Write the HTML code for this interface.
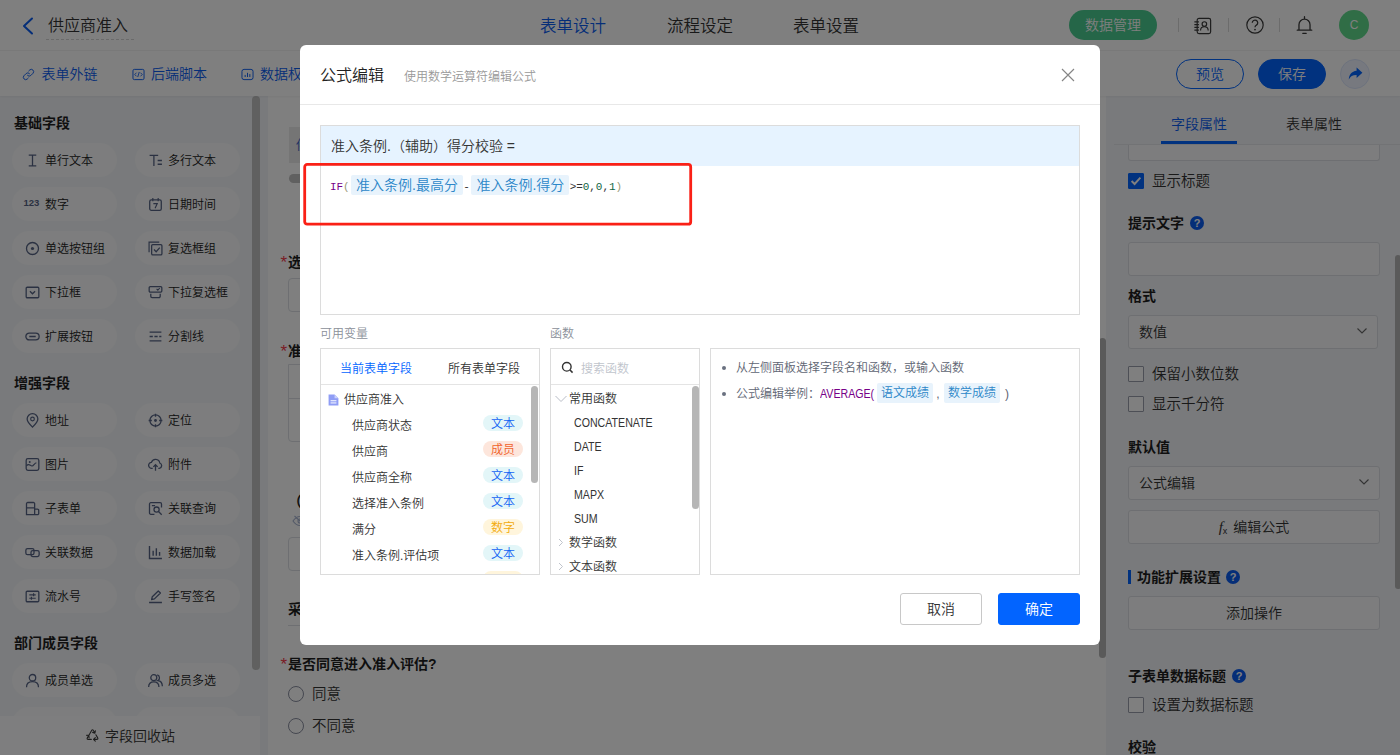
<!DOCTYPE html>
<html lang="zh-CN">
<head>
<meta charset="utf-8">
<title>公式编辑</title>
<style>
*{box-sizing:border-box;margin:0;padding:0}
html,body{width:1400px;height:755px;overflow:hidden;background:#fff}
body{font-family:"Liberation Sans","Noto Sans CJK SC",sans-serif;font-size:14px;font-weight:350;color:#333;position:relative}
.abs{position:absolute}
i{font-style:normal;display:block}
svg{display:block}
/* ---------- header ---------- */
#hdr{position:absolute;left:0;top:0;width:1400px;height:51px;background:#fff;border-bottom:1px solid #f2f2f2}
#hdr .back{position:absolute;left:21px;top:16.500px}
#hdr .title{position:absolute;left:46px;top:12px;height:28px;line-height:27px;padding:0 6px 0 2px;font-size:16px;color:#333;border-bottom:1px dashed #d4d4d4}
#hdr .nav{position:absolute;top:1px;height:50px;line-height:50px;font-size:16.5px;color:#333;white-space:nowrap}
#hdr .nav.on{color:#0a5cf0}
#hdr .dm{position:absolute;left:1069px;top:10px;width:88px;height:30px;border-radius:15px;background:#4acc90;color:#fff;font-size:14px;line-height:30px;text-align:center}
#hdr .sep{position:absolute;top:18px;width:1px;height:14px;background:#d9d9d9}
#hdr .ava{position:absolute;left:1339px;top:10px;width:30px;height:30px;border-radius:15px;background:#60da8c;color:#fff;font-size:12px;line-height:30px;text-align:center}
/* ---------- toolbar ---------- */
#tb{position:absolute;left:0;top:51px;width:1400px;height:45px;background:#fff;z-index:2;box-shadow:0 1px 2px rgba(0,0,0,.050)}
#tb .lk{position:absolute;top:1px;height:44px;line-height:44px;font-size:14px;color:#0a5cf0;white-space:nowrap}
#tb .ic{position:absolute;top:16.500px;width:13px;height:13px}
#tb .pill{position:absolute;top:8px;width:68px;height:30px;border-radius:15px;font-size:14px;line-height:28px;text-align:center;border:1px solid #0264ff}
#tb .pv{left:1176px;color:#0264ff;background:#fff}
#tb .sv{left:1258px;color:#fff;background:#0264ff}
#tb .sh{position:absolute;left:1340px;top:8px;width:30px;height:30px;border-radius:15px;background:#eef3ff;border:1px solid #dbe5fb}
/* ---------- left sidebar ---------- */
#side{position:absolute;left:0;top:95px;width:268px;height:660px;background:#f3f5f8;overflow:hidden}
#side h4{position:absolute;left:14px;font-size:14px;font-weight:700;color:#1f1f1f;line-height:20px;white-space:nowrap}
#side .fp{position:absolute;width:105px;height:34px;border-radius:17px;background:#fafbfc;font-size:12px;line-height:37px;color:#222;white-space:nowrap;padding-left:33px;overflow:hidden}
#side .fp svg{position:absolute;left:12.500px;top:9.500px;width:15px;height:15px}
#side .n123{position:absolute;left:11.500px;top:-3px;font-size:9.500px;font-weight:700;color:#566384;letter-spacing:0}
#side .c1{left:12px}
#side .c2{left:135px}
#side .sb{position:absolute;left:252px;top:1px;width:8px;height:574px;border-radius:4px;background:#c0c0c0}
#side .bin{position:absolute;left:0;top:621px;width:260px;height:39px;background:#fdfdfe;font-size:14px;color:#333;line-height:41px;padding-left:105px}
#side .bin .rc{position:absolute;left:84.500px;top:11px}
/* ---------- canvas ---------- */
#cv{position:absolute;left:268px;top:95px;width:832px;height:660px;background:#fff;overflow:hidden}
#cv .lab{position:absolute;left:20px;font-size:14px;font-weight:700;color:#1f1f1f;line-height:20px;white-space:nowrap}
#cv .lab b{position:absolute;left:-7.500px;top:1px;color:#f5384a;font-weight:400;font-size:17px}
#cv .inp{position:absolute;left:20px;width:790px;height:34px;border:1px solid #dcdfe4;border-radius:4px;background:#fff}
#cv .rd{position:absolute;left:20px;width:16px;height:16px;border:1px solid #8a8fa0;border-radius:8px;background:#fff}
#cv .rdl{position:absolute;left:44px;font-size:14.500px;line-height:20px;color:#333;white-space:nowrap}
#gut{position:absolute;left:1100px;top:95px;width:8px;height:660px;background:#fff}
#gut i{position:absolute;left:-1.500px;top:243px;width:7.800px;height:320px;border-radius:4px;background:#b4b4b4}
/* ---------- right panel ---------- */
#rp{position:absolute;left:1108px;top:95px;width:292px;height:660px;background:#f3f5f8;box-shadow:-2px 0 0 #f3f5f8}
#rp .tab{position:absolute;top:19px;font-size:14px;line-height:20px;color:#333;white-space:nowrap}
#rp .tab.on{color:#0a5cf0}
#rp .ul{position:absolute;left:53px;top:46px;width:76px;height:3px;background:#0264ff}
#rp .ln{position:absolute;left:6px;top:49px;width:286px;height:1px;background:#e4e6ea}
#rp .lab{position:absolute;left:20px;font-size:14px;font-weight:700;color:#1f1f1f;line-height:20px;white-space:nowrap}
#rp .box{position:absolute;left:20px;width:252px;height:34px;border:1px solid #dcdfe4;border-radius:3px;background:#fafbfc;font-size:14px;line-height:32px;color:#333;padding-left:10px;white-space:nowrap}
#rp .box.c{text-align:center;padding-left:0}
#rp .ck{position:absolute;left:20px;width:16px;height:16px;border:1px solid #9a9fac;border-radius:1px;background:#fff}
#rp .ck.on{background:#0264ff;border-color:#0264ff}
#rp .ckl{position:absolute;left:44px;font-size:14.500px;line-height:20px;color:#333;white-space:nowrap}
#rp .q{position:absolute;width:14px;height:14px;border-radius:7px;background:#0a5cf0;color:#fff;font-size:11px;font-weight:700;line-height:14px;text-align:center}
#rp .chev{position:absolute;right:9px;top:11px}
#rp .sb{position:absolute;left:286.500px;top:160px;width:6px;height:334px;border-radius:3px;background:#b4b4b4}
/* ---------- overlay & modal ---------- */
#mask{position:absolute;left:0;top:0;width:1400px;height:755px;background:rgba(0,0,0,.5);z-index:10}
#dlg{position:absolute;left:300px;top:45px;width:800px;height:600px;background:#fff;border-radius:6px;z-index:11}
#dlg .ttl{position:absolute;left:20px;top:19px;font-size:16px;line-height:24px;color:#222;white-space:nowrap}
#dlg .sub{position:absolute;left:104px;top:22px;font-size:12px;line-height:20px;color:#999;white-space:nowrap}
#dlg .x{position:absolute;left:761px;top:22.500px}
#dlg .hl{position:absolute;left:0;top:59px;width:800px;height:1px;background:#e8e8e8}
#dlg .fb{position:absolute;left:20px;top:80px;width:760px;height:190px;border:1px solid #dcdcdc;background:#fff}
#dlg .fb .hd{height:40px;background:#e6f3ff;font-size:14px;line-height:40px;color:#333;padding-left:10px;white-space:nowrap}
#dlg .code{position:absolute;left:9px;top:50.500px;height:20px;line-height:20px;white-space:nowrap;font-family:"Liberation Mono",monospace;font-size:11px;letter-spacing:-.100px;color:#333}
#dlg .code .k{color:#770088}
#dlg .code .p{color:#999977}
#dlg .code .n{color:#116644}
#dlg .tag{display:inline-block;letter-spacing:0;margin-left:1.500px;position:relative;top:-1.500px;height:20px;line-height:20px;padding:0 5px;border-radius:2px;background:#e8f3fc;color:#2b86c8;font-family:"Liberation Sans","Noto Sans CJK SC",sans-serif;font-size:14px;vertical-align:top}
#dlg .red{position:absolute;left:3px;top:118px}
#dlg .sl{position:absolute;top:279px;font-size:12px;line-height:20px;color:#8a8f99}
#dlg .pn{position:absolute;top:303px;height:227px;border:1px solid #dcdcdc;background:#fff;overflow:hidden;font-size:12px;color:#333}
#dlg .pn .th{position:absolute;left:0;top:0;width:100%;height:36px;border-bottom:1px solid #e4e4e4}
#dlg .pn .t{position:absolute;top:9.500px;line-height:20px;white-space:nowrap}
#dlg .pn .r{position:absolute;line-height:20px;white-space:nowrap}
#dlg .pn .vs{position:absolute;width:7px;border-radius:4px;background:#b6b6b6}
#dlg .bd{position:absolute;margin-top:-1px;left:162px;width:40px;height:16px;border-radius:8px;font-size:12px;line-height:19px;text-align:center;overflow:hidden}
#dlg .bd.tx{background:#e3f6f8;color:#1464f4}
#dlg .bd.mb{background:#fde6dc;color:#f0622a}
#dlg .bd.nm{background:#fff5dc;color:#f2aa0a}
#dlg .en{display:inline-block;transform:scaleX(.885);transform-origin:0 50%}
#dlg .hp{color:#5e6573}
#dlg .hp .dot{position:absolute;left:10.500px;width:4px;height:4px;border-radius:2px;background:#6a7180}
#dlg .hp .tg{display:inline-block;height:20px;line-height:20px;position:relative;top:-1px;padding:0 3.800px;border-radius:2px;background:#e8f3fc;color:#2b86c8;vertical-align:top;margin:0 2px}
#dlg .btn{position:absolute;top:548px;width:82px;height:32px;border-radius:3px;font-size:14px;line-height:30px;text-align:center}
#dlg .cancel{left:600px;border:1px solid #c8c8c8;background:#fff;color:#333}
#dlg .ok{left:698px;border:1px solid #0264ff;background:#0264ff;color:#fff}
</style>
</head>
<body>
<!-- header -->
<div id="hdr">
  <svg class="back" width="14" height="18" viewBox="0 0 14 18"><path d="M11 1.5 L3 9 L11 16.5" fill="none" stroke="#0a5cf0" stroke-width="2" stroke-linecap="round" stroke-linejoin="round"/></svg>
  <div class="title">供应商准入</div>
  <div class="nav on" style="left:540px">表单设计</div>
  <div class="nav" style="left:667px">流程设定</div>
  <div class="nav" style="left:793px">表单设置</div>
  <div class="dm">数据管理</div>
  <i class="sep" style="left:1178px"></i>
  <i class="sep" style="left:1228px"></i>
  <i class="sep" style="left:1279px"></i>
  <svg class="abs" style="left:1192.500px;top:15.500px" width="20" height="20" viewBox="0 0 22 22"><rect x="4.600" y="2.600" width="14.800" height="16.800" rx="2" fill="none" stroke="#3a3a3a" stroke-width="1.300"/><path d="M1.500 6.500h5M1.500 9.500h5M1.500 12.500h5M1.500 15.500h5" stroke="#3a3a3a" stroke-width="1.200"/><circle cx="12.500" cy="8.800" r="2.500" fill="none" stroke="#3a3a3a" stroke-width="1.300"/><path d="M8.300 16c0-2.800 1.800-4.200 4.200-4.200s4.200 1.400 4.200 4.200" fill="none" stroke="#3a3a3a" stroke-width="1.300"/></svg>
  <svg class="abs" style="left:1244.500px;top:15px" width="20" height="20" viewBox="0 0 22 22"><circle cx="11" cy="11" r="9" fill="none" stroke="#3a3a3a" stroke-width="1.300"/><path d="M8 8.600a3 3 0 1 1 4.600 2.500c-1 .7-1.600 1.200-1.600 2.400" fill="none" stroke="#3a3a3a" stroke-width="1.400"/><circle cx="11" cy="16" r=".95" fill="#3a3a3a"/></svg>
  <svg class="abs" style="left:1295px;top:14.500px" width="19" height="21" viewBox="0 0 22 24"><path d="M11 1.800v2M4.600 17V11a6.400 6.400 0 0 1 12.800 0v6M2.600 17.400h16.800M9 21h4" fill="none" stroke="#3a3a3a" stroke-width="1.500" stroke-linecap="round"/></svg>
  <div class="ava">C</div>
</div>
<!-- toolbar -->
<div id="tb">
  <svg class="ic" style="left:22px" width="15" height="15" viewBox="0 0 15 15"><path d="M6.400 8.600a2.700 2.700 0 0 0 3.800 0l2.600-2.600a2.700 2.700 0 0 0-3.800-3.800L7.800 3.400M8.600 6.400a2.700 2.700 0 0 0-3.800 0L2.200 9a2.700 2.700 0 0 0 3.800 3.800l1.200-1.200" fill="none" stroke="#0a5cf0" stroke-width="1.100" stroke-linecap="round"/></svg>
  <svg class="ic" style="left:131.500px" width="15" height="15" viewBox="0 0 15 15"><rect x="1.100" y="1.600" width="12.800" height="11.800" rx="1.600" fill="none" stroke="#0a5cf0" stroke-width="1.100"/><path d="M5.200 5.400L3.200 7.500l2 2.100M9.800 5.400l2 2.100-2 2.100M8.400 4.600L6.600 10.400" fill="none" stroke="#0a5cf0" stroke-width="1"/></svg>
  <svg class="ic" style="left:240.500px" width="15" height="15" viewBox="0 0 15 15"><rect x="1.100" y="1.600" width="12.800" height="11.800" rx="2.400" fill="none" stroke="#0a5cf0" stroke-width="1.100"/><path d="M4.800 10.400V8M7.500 10.400V5.600M10.200 10.400V7" stroke="#0a5cf0" stroke-width="1.100"/></svg>
  <div class="lk" style="left:41.500px">表单外链</div>
  <div class="lk" style="left:151px">后端脚本</div>
  <div class="lk" style="left:260px">数据权限</div>
  <div class="pill pv">预览</div>
  <div class="pill sv">保存</div>
  <div class="sh"><svg style="margin:7px 0 0 7px" width="15" height="14" viewBox="0 0 15 14"><path d="M8.600 0.600L14.400 5.800 8.600 11V7.900C4.800 7.800 2.400 9.200 0.800 12.600 1 7.600 3.600 4.200 8.600 3.700z" fill="#0264ff"/></svg></div>
</div>
<!-- sidebar -->
<div id="side">
  <h4 style="top:18px">基础字段</h4>
  <div class="fp c1" style="top:48px"><svg width="14" height="14" viewBox="0 0 14 14"><path d="M3.5 2h7M3.5 12h7M7 2v10" fill="none" stroke="#566384" stroke-width="1.2"/></svg>单行文本</div>
  <div class="fp c2" style="top:48px"><svg width="14" height="14" viewBox="0 0 14 14"><path d="M1.5 2.2h8M5.5 2.2v10M9 7h4M9 10.5h4" fill="none" stroke="#566384" stroke-width="1.2"/></svg>多行文本</div>
  <div class="fp c1" style="top:92px"><span class="n123">123</span>数字</div>
  <div class="fp c2" style="top:92px"><svg width="14" height="14" viewBox="0 0 14 14"><rect x="1.6" y="2.6" width="10.8" height="9.8" rx="1.5" fill="none" stroke="#566384" stroke-width="1.2"/><path d="M4.5 1v3M9.5 1v3M5 6.2h3.6L6.6 10.4" fill="none" stroke="#566384" stroke-width="1.1"/></svg>日期时间</div>
  <div class="fp c1" style="top:136px"><svg width="14" height="14" viewBox="0 0 14 14"><circle cx="7" cy="7" r="5.6" fill="none" stroke="#566384" stroke-width="1.2"/><circle cx="7" cy="7" r="1.5" fill="#566384"/></svg>单选按钮组</div>
  <div class="fp c2" style="top:136px"><svg width="14" height="14" viewBox="0 0 14 14"><path d="M1 10.5V1h9.5" fill="none" stroke="#566384" stroke-width="1.1"/><rect x="3.4" y="3.4" width="9.6" height="9.6" rx="1" fill="none" stroke="#566384" stroke-width="1.2"/><path d="M5.6 8l2 2 3.4-3.8" fill="none" stroke="#566384" stroke-width="1.2"/></svg>复选框组</div>
  <div class="fp c1" style="top:180px"><svg width="14" height="14" viewBox="0 0 14 14"><rect x="1.1" y="2.1" width="11.8" height="9.8" rx="1" fill="none" stroke="#566384" stroke-width="1.2"/><path d="M4.6 5.8L7 8.2l2.4-2.4" fill="none" stroke="#566384" stroke-width="1.2"/></svg>下拉框</div>
  <div class="fp c2" style="top:180px"><svg width="14" height="14" viewBox="0 0 14 14"><rect x="1.1" y="1.6" width="11.8" height="5" rx="1" fill="none" stroke="#566384" stroke-width="1.2"/><path d="M8 3.6l1.2 1.2 1.8-2" fill="none" stroke="#566384" stroke-width="1"/><path d="M2.6 8.2v2.4a1.2 1.2 0 0 0 1.2 1.2h6.4a1.2 1.2 0 0 0 1.2-1.2V8.2" fill="none" stroke="#566384" stroke-width="1.2"/></svg>下拉复选框</div>
  <div class="fp c1" style="top:224px"><svg width="14" height="14" viewBox="0 0 14 14"><rect x="0.8" y="3.8" width="12.4" height="6.4" rx="3.2" fill="none" stroke="#566384" stroke-width="1.2"/><path d="M4 7h6" stroke="#566384" stroke-width="1.2"/></svg>扩展按钮</div>
  <div class="fp c2" style="top:224px"><svg width="14" height="14" viewBox="0 0 14 14"><path d="M1.5 3h11M1.5 11h11" stroke="#566384" stroke-width="1.2"/><path d="M1.5 7h11" stroke="#566384" stroke-width="1.2" stroke-dasharray="3 1.5"/></svg>分割线</div>
  <h4 style="top:278px">增强字段</h4>
  <div class="fp c1" style="top:308px"><svg width="14" height="14" viewBox="0 0 14 14"><path d="M7 13.2C3.6 9.8 2 7.6 2 5.6a5 5 0 0 1 10 0c0 2-1.6 4.2-5 7.6z" fill="none" stroke="#566384" stroke-width="1.2"/><circle cx="7" cy="5.6" r="1.7" fill="none" stroke="#566384" stroke-width="1.1"/></svg>地址</div>
  <div class="fp c2" style="top:308px"><svg width="14" height="14" viewBox="0 0 14 14"><circle cx="7" cy="7" r="5.2" fill="none" stroke="#566384" stroke-width="1.2"/><path d="M7 0.600v3M7 10.400v3M0.600 7h3M10.400 7h3" stroke="#566384" stroke-width="1.200"/><circle cx="7" cy="7" r="1.300" fill="#566384"/></svg>定位</div>
  <div class="fp c1" style="top:352px"><svg width="14" height="14" viewBox="0 0 14 14"><rect x="1.1" y="1.6" width="11.8" height="10.8" rx="1.6" fill="none" stroke="#566384" stroke-width="1.2"/><path d="M1.4 8.2c2-2.6 3.4-.2 5 .2s2-2.4 4.2-3" fill="none" stroke="#566384" stroke-width="1.1"/><circle cx="4.4" cy="4.6" r=".9" fill="#566384"/></svg>图片</div>
  <div class="fp c2" style="top:352px"><svg width="14" height="14" viewBox="0 0 14 14"><path d="M4.4 10.6H3.6a2.8 2.8 0 0 1-.4-5.6 4 4 0 0 1 7.8.6 2.6 2.6 0 0 1-.4 5H9.6" fill="none" stroke="#566384" stroke-width="1.2"/><path d="M7 12.8V7.4M5 9.2l2-2 2 2" fill="none" stroke="#566384" stroke-width="1.2"/></svg>附件</div>
  <div class="fp c1" style="top:396px"><svg width="14" height="14" viewBox="0 0 14 14"><path d="M1.4 12.8V2.6a1.2 1.2 0 0 1 1.2-1.2h5.2A1.2 1.2 0 0 1 9 2.6v10.2zM1.4 6.4H9M9 7.6h2.6a1.2 1.2 0 0 1 1.2 1.2v2.8a1.2 1.2 0 0 1-1.2 1.2H9" fill="none" stroke="#566384" stroke-width="1.2"/></svg>子表单</div>
  <div class="fp c2" style="top:396px"><svg width="14" height="14" viewBox="0 0 14 14"><path d="M12.6 6V2.8a1.2 1.2 0 0 0-1.2-1.2H2.6a1.2 1.2 0 0 0-1.2 1.2v8.4a1.2 1.2 0 0 0 1.2 1.2H6" fill="none" stroke="#566384" stroke-width="1.2"/><circle cx="8" cy="8" r="2.4" fill="none" stroke="#566384" stroke-width="1.2"/><path d="M9.8 9.8l3 3M3.6 4.4h3" stroke="#566384" stroke-width="1.2"/></svg>关联查询</div>
  <div class="fp c1" style="top:440px"><svg width="14" height="14" viewBox="0 0 14 14"><rect x="0.800" y="3.400" width="7.600" height="5.600" rx="1.600" fill="none" stroke="#566384" stroke-width="1.200"/><rect x="5.600" y="5.200" width="7.600" height="5.600" rx="1.600" fill="none" stroke="#566384" stroke-width="1.200"/></svg>关联数据</div>
  <div class="fp c2" style="top:440px"><svg width="14" height="14" viewBox="0 0 14 14"><path d="M1.4 1v11.6h11.6M4.8 10V5.4M7.8 10V3M10.8 10V6.6" fill="none" stroke="#566384" stroke-width="1.3"/></svg>数据加载</div>
  <div class="fp c1" style="top:484px"><svg width="14" height="14" viewBox="0 0 14 14"><rect x="1.1" y="2.1" width="11.8" height="9.8" rx="1" fill="none" stroke="#566384" stroke-width="1.2"/><path d="M4 5.4h6M4 8.6h6M8 4v2.8M6 7.2V10" stroke="#566384" stroke-width="1.1"/></svg>流水号</div>
  <div class="fp c2" style="top:484px"><svg width="14" height="14" viewBox="0 0 14 14"><path d="M3.4 9.8l.6-2.6 5.6-5.4 2 2L6 9.2zM1 12.6h12" fill="none" stroke="#566384" stroke-width="1.2" stroke-linejoin="round"/></svg>手写签名</div>
  <h4 style="top:538px">部门成员字段</h4>
  <div class="fp c1" style="top:568px"><svg width="14" height="14" viewBox="0 0 14 14"><circle cx="7" cy="4.4" r="3" fill="none" stroke="#566384" stroke-width="1.2"/><path d="M1.4 13.2c0-3.4 2.4-5.2 5.6-5.2s5.6 1.8 5.6 5.2" fill="none" stroke="#566384" stroke-width="1.2"/></svg>成员单选</div>
  <div class="fp c2" style="top:568px"><svg width="14" height="14" viewBox="0 0 14 14"><circle cx="5.4" cy="4.4" r="2.8" fill="none" stroke="#566384" stroke-width="1.2"/><path d="M0.6 13c0-3.2 2-4.8 4.8-4.8s4.8 1.6 4.8 4.8M8.6 1.8a2.8 2.8 0 0 1 .6 5.2c2.4.4 4.2 2.2 4.2 5.4" fill="none" stroke="#566384" stroke-width="1.2"/></svg>成员多选</div>
  <div class="fp c1" style="top:612px"></div>
  <div class="fp c2" style="top:612px"></div>
  <i class="sb"></i>
  <div class="bin"><svg class="rc" width="15" height="15" viewBox="0 0 14 15"><path d="M3.300 8.400L6.100 3.500Q7 2 7.900 3.500L9.300 5.900M9.900 3.700L9.400 6.100 7.100 5.400M10.400 7.800l1.800 3.100q.7 1.500-.9 1.500H8.200M9.800 10.700L8 12.400l1.800 1.700M5.800 12.400H2.700q-1.600 0-.9-1.500L3.100 8.700M1 8.300l2.300.1.300 2.300" fill="none" stroke="#3c3c3c" stroke-width="1.100" stroke-linecap="round" stroke-linejoin="round"/></svg>字段回收站</div>
</div>
<!-- canvas -->
<div id="cv">
  <div class="abs" style="left:21px;top:32px;width:790px;height:36px;background:#eaeaea;font-size:13px;line-height:36px;color:#3a66c8;padding-left:7px">供应商信息</div>
  <i class="abs" style="left:21px;top:79px;width:420px;height:9px;border-radius:5px;background:#c0c0c0"></i>
  <div class="lab" style="top:157px"><b>*</b>选择准入条例</div>
  <div class="inp" style="top:183px"></div>
  <div class="lab" style="top:246px"><b>*</b>准入条例</div>
  <div class="inp" style="top:269px;height:78px;border-radius:0 0 4px 4px"><i class="abs" style="left:0;top:33px;width:100%;height:1px;background:#dcdfe4"></i></div>
  <div class="lab" style="top:396px">（辅助）得分校验</div>
  <svg class="abs" style="left:24px;top:420px" width="16" height="12" viewBox="0 0 16 12"><path d="M1 6c2-3 4.400-4.500 7-4.500S13 3 15 6c-2 3-4.400 4.500-7 4.500S3 9 1 6zM2.500 1l11 10" fill="none" stroke="#a8b4d0" stroke-width="1.100"/><circle cx="8" cy="6" r="2" fill="none" stroke="#a8b4d0" stroke-width="1.100"/></svg>
  <div class="inp" style="top:442px"></div>
  <div class="lab" style="top:504px">采购部评估意见</div>
  <i class="abs" style="left:20px;top:530px;width:790px;height:1px;background:#dcdfe4"></i>
  <div class="lab" style="top:559px"><b>*</b>是否同意进入准入评估?</div>
  <i class="rd" style="top:591px"></i><div class="rdl" style="top:589px">同意</div>
  <i class="rd" style="top:623px"></i><div class="rdl" style="top:621px">不同意</div>
</div>
<div id="gut"><i></i></div>
<!-- right panel -->
<div id="rp">
  <div class="tab on" style="left:63px">字段属性</div>
  <div class="tab" style="left:178px">表单属性</div>
  <i class="ul"></i><i class="ln"></i>
  <div class="box" style="top:50px;height:16px;border-top:none;border-radius:0 0 3px 3px"></div>
  <div class="ck on" style="top:78px"><svg width="14" height="14" viewBox="0 0 14 14"><path d="M2.600 7l3 3 5.800-6.400" fill="none" stroke="#fff" stroke-width="1.900"/></svg></div><div class="ckl" style="top:76px">显示标题</div>
  <div class="lab" style="top:118px">提示文字</div><i class="q" style="left:82px;top:121px">?</i>
  <div class="box" style="top:147px"></div>
  <div class="lab" style="top:191px">格式</div>
  <div class="box" style="top:220px;width:250px">数值<svg class="chev" width="12" height="8" viewBox="0 0 12 8"><path d="M1.500 1.500l4.500 4.500 4.500-4.500" fill="none" stroke="#666" stroke-width="1.100"/></svg></div>
  <div class="ck" style="top:271px"></div><div class="ckl" style="top:269px">保留小数位数</div>
  <div class="ck" style="top:301px"></div><div class="ckl" style="top:299px">显示千分符</div>
  <div class="lab" style="top:342px">默认值</div>
  <div class="box" style="top:371px">公式编辑<svg class="chev" width="12" height="8" viewBox="0 0 12 8"><path d="M1.500 1.500l4.500 4.500 4.500-4.500" fill="none" stroke="#666" stroke-width="1.100"/></svg></div>
  <div class="box c" style="top:415px"><span style="font-family:'Liberation Serif',serif;font-style:italic;font-size:15px">f</span><span style="font-size:9px;position:relative;top:2px;margin-right:6px">x</span>编辑公式</div>
  <i class="abs" style="left:20px;top:475px;width:3px;height:14px;background:#0264ff"></i>
  <div class="lab" style="top:472px;left:29px">功能扩展设置</div><i class="q" style="left:118px;top:475px">?</i>
  <div class="box c" style="top:501px">添加操作</div>
  <div class="lab" style="top:571px">子表单数据标题</div><i class="q" style="left:124px;top:574px">?</i>
  <div class="ck" style="top:602px"></div><div class="ckl" style="top:600px">设置为数据标题</div>
  <div class="lab" style="top:642px">校验</div>
  <i class="sb"></i>
</div>
<!-- overlay -->
<div id="mask"></div>
<!-- modal -->
<div id="dlg">
  <div class="ttl">公式编辑</div>
  <div class="sub">使用数学运算符编辑公式</div>
  <svg class="x" width="14" height="14" viewBox="0 0 14 14"><path d="M1 1l12 12M13 1L1 13" stroke="#858585" stroke-width="1.150"/></svg>
  <i class="hl"></i>
  <div class="fb">
    <div class="hd">准入条例.（辅助）得分校验 =</div>
    <div class="code"><span class="k">IF</span><span class="p">(</span><span class="tag">准入条例.最高分</span><span style="display:inline-block;width:7px;text-align:center">-</span><span class="tag">准入条例.得分</span><span style="margin-left:.500px">&gt;=</span><span class="n">0</span>,<span class="n">0</span>,<span class="n">1</span><span class="p">)</span></div>
  </div>
  <svg class="red" width="390" height="63" viewBox="0 0 390 63"><rect x="1.700" y="1.400" width="386" height="59.800" rx="2.500" fill="none" stroke="#fa2016" stroke-width="2.800"/></svg>
  <div class="sl" style="left:20px">可用变量</div>
  <div class="sl" style="left:250px">函数</div>
  <!-- variables -->
  <div class="pn" style="left:20px;width:220px">
    <div class="th"></div>
    <div class="t" style="left:19px;color:#0264ff">当前表单字段</div>
    <div class="t" style="left:127px">所有表单字段</div>
    <svg class="abs" style="left:7px;top:44.500px" width="11" height="12" viewBox="0 0 10 11"><path d="M0.500 0.500h5.500l3.500 3.500v6.500h-9z" fill="#8f9df5"/><path d="M6 0.500v3.500h3.500z" fill="#c9d0fb"/><path d="M2.300 6.200h5.400M2.300 8.200h5.400" stroke="#fff" stroke-width=".9"/></svg>
    <div class="r" style="left:23px;top:41px">供应商准入</div>
    <div class="r" style="left:31px;top:67px">供应商状态</div><i class="bd tx" style="top:67px">文本</i>
    <div class="r" style="left:31px;top:93px">供应商</div><i class="bd mb" style="top:93px">成员</i>
    <div class="r" style="left:31px;top:119px">供应商全称</div><i class="bd tx" style="top:119px">文本</i>
    <div class="r" style="left:31px;top:145px">选择准入条例</div><i class="bd tx" style="top:145px">文本</i>
    <div class="r" style="left:31px;top:171px">满分</div><i class="bd nm" style="top:171px">数字</i>
    <div class="r" style="left:31px;top:197px">准入条例.评估项</div><i class="bd tx" style="top:197px">文本</i>
    <i class="bd nm" style="top:223px"></i>
    <i class="vs" style="left:210px;top:36.500px;height:97.500px"></i>
  </div>
  <!-- functions -->
  <div class="pn" style="left:250px;width:150px">
    <div class="th"></div>
    <svg class="abs" style="left:10px;top:12px" width="13" height="13" viewBox="0 0 13 13"><circle cx="5.800" cy="5.800" r="4.300" fill="none" stroke="#333" stroke-width="1.400"/><path d="M9 9l2.600 2.600" stroke="#333" stroke-width="1.500"/></svg>
    <div class="t" style="left:30px;color:#c0c4cc">搜索函数</div>
    <svg class="abs" style="left:4px;top:46px" width="12" height="8" viewBox="0 0 12 8"><path d="M.5 1l5.500 5.500L11.500 1" fill="none" stroke="#b8bcc6" stroke-width="1"/></svg>
    <div class="r" style="left:18px;top:40px">常用函数</div>
    <div class="r en" style="left:23px;top:64px">CONCATENATE</div>
    <div class="r en" style="left:23px;top:88px">DATE</div>
    <div class="r en" style="left:23px;top:112px">IF</div>
    <div class="r en" style="left:23px;top:136px">MAPX</div>
    <div class="r en" style="left:23px;top:160px">SUM</div>
    <svg class="abs" style="left:7px;top:189px" width="6" height="9" viewBox="0 0 6 9"><path d="M1 1l3.500 3.500L1 8" fill="none" stroke="#c0c4cc" stroke-width="1"/></svg>
    <div class="r" style="left:18px;top:184px">数学函数</div>
    <svg class="abs" style="left:7px;top:213px" width="6" height="9" viewBox="0 0 6 9"><path d="M1 1l3.500 3.500L1 8" fill="none" stroke="#c0c4cc" stroke-width="1"/></svg>
    <div class="r" style="left:18px;top:208px">文本函数</div>
    <i class="vs" style="left:141px;top:37px;height:123px"></i>
  </div>
  <!-- help -->
  <div class="pn hp" style="left:410px;width:370px">
    <i class="dot" style="top:17px"></i>
    <div class="r" style="left:25px;top:9px;color:#5e6573">从左侧面板选择字段名和函数，或输入函数</div>
    <i class="dot" style="top:43px"></i>
    <div class="r" style="left:25px;top:35px;color:#5e6573">公式编辑举例：<span class="en" style="color:#770088;margin-right:-8px">AVERAGE(</span><span class="tg" style="margin-left:4px">语文成绩</span><span style="margin-left:1.500px">,</span><span class="tg" style="margin-left:4.500px">数学成绩</span> )</div>
  </div>
  <div class="btn cancel">取消</div>
  <div class="btn ok">确定</div>
</div>
</body>
</html>
